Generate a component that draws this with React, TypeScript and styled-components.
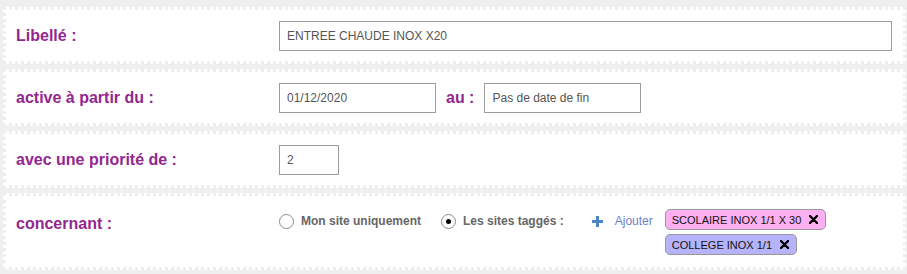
import * as React from 'react';
import styled, { createGlobalStyle } from 'styled-components';

const GlobalStyle = createGlobalStyle`
  body {
    margin: 0;
    background: #efefef;
    font-family: "Liberation Sans", Arial, sans-serif;
  }
`;

const Page = styled.div`
  display: flex;
  flex-direction: column;
  gap: 5px;
  padding: 7px 1px 4px 3px;
`;

const Panel = styled.div<{ tall?: boolean }>`
  display: grid;
  grid-template-columns: 263px 1fr;
  align-items: ${p => (p.tall ? 'start' : 'center')};
  box-sizing: border-box;
  height: ${p => (p.tall ? 'auto' : '57px')};
  padding: ${p => (p.tall ? '13px 11px 12px 10px' : '0 11px 0 10px')};
  background: #fff;
  border: 3px dotted #efefef;
`;

const Label = styled.div<{ tall?: boolean }>`
  color: #93278f;
  font-size: 16px;
  font-weight: bold;
  line-height: ${p => (p.tall ? '30px' : 'normal')};
`;

const Field = styled.div`
  display: flex;
  align-items: center;
`;

const TextInput = styled.input<{ w?: number }>`
  box-sizing: border-box;
  width: ${p => (p.w ? `${p.w}px` : '100%')};
  height: 30px;
  padding: 0 7px;
  border: 1px solid #9d9d9d;
  border-radius: 0;
  background: #fff;
  color: #555;
  font-family: "Liberation Sans", Arial, sans-serif;
  font-size: 12px;
  outline: none;
`;

const Au = styled.span`
  margin: 0 10px;
  color: #93278f;
  font-size: 16px;
  font-weight: bold;
`;

const Choices = styled.div`
  display: flex;
  align-items: flex-start;
`;

const ChoiceLine = styled.div`
  display: flex;
  align-items: center;
  height: 22px;
  margin-top: 1px;
`;

const Radio = styled.span<{ checked?: boolean }>`
  box-sizing: border-box;
  display: inline-flex;
  align-items: center;
  justify-content: center;
  width: 15px;
  height: 15px;
  border: 1px solid #8a8a8a;
  border-radius: 50%;
  background: #fff;
  margin-right: 7px;

  &::after {
    content: '';
    display: ${p => (p.checked ? 'block' : 'none')};
    width: 5px;
    height: 5px;
    border-radius: 50%;
    background: #000;
  }
`;

const RadioText = styled.span<{ gapAfter: number }>`
  color: #666;
  font-size: 12px;
  font-weight: bold;
  margin-right: ${p => p.gapAfter}px;
`;

const AddButton = styled.span`
  display: inline-flex;
  align-items: center;
  gap: 12px;
  color: #6c7fc4;
  font-size: 12px;
  margin-right: 12px;
`;

const Tags = styled.div`
  display: flex;
  flex-direction: column;
  align-items: flex-start;
  gap: 4px;
`;

const Tag = styled.span<{ bg: string }>`
  box-sizing: border-box;
  display: inline-flex;
  align-items: center;
  gap: 8px;
  height: 21px;
  padding: 0 7px 0 6px;
  border: 1px solid #999;
  border-radius: 5px;
  background: ${p => p.bg};
  color: #111;
  font-size: 11px;
`;

const PlusIcon = () => (
  <svg width="11" height="11" viewBox="0 0 11 11">
    <rect x="4" y="0" width="3" height="11" fill="#4d85c6" />
    <rect x="0" y="4" width="11" height="3" fill="#4d85c6" />
  </svg>
);

const CloseIcon = () => (
  <svg width="9" height="9" viewBox="0 0 9 9">
    <path d="M1 1 L8 8 M8 1 L1 8" stroke="#000" strokeWidth="2.4" strokeLinecap="round" />
  </svg>
);

export default function App() {
  return (
    <>
      <GlobalStyle />
      <Page>
        <Panel>
          <Label>Libellé :</Label>
          <Field>
            <TextInput defaultValue="ENTREE CHAUDE INOX X20" />
          </Field>
        </Panel>
        <Panel>
          <Label>active à partir du :</Label>
          <Field>
            <TextInput w={157} defaultValue="01/12/2020" />
            <Au>au :</Au>
            <TextInput w={157} defaultValue="Pas de date de fin" />
          </Field>
        </Panel>
        <Panel>
          <Label>avec une priorité de :</Label>
          <Field>
            <TextInput w={60} defaultValue="2" />
          </Field>
        </Panel>
        <Panel tall>
          <Label tall>concernant :</Label>
          <Choices>
            <ChoiceLine>
              <Radio />
              <RadioText gapAfter={20}>Mon site uniquement</RadioText>
              <Radio checked />
              <RadioText gapAfter={28}>Les sites taggés :</RadioText>
              <AddButton>
                <PlusIcon />
                Ajouter
              </AddButton>
            </ChoiceLine>
            <Tags>
              <Tag bg="#fdb0f1">
                SCOLAIRE INOX 1/1 X 30
                <CloseIcon />
              </Tag>
              <Tag bg="#b7b3fa">
                COLLEGE INOX 1/1
                <CloseIcon />
              </Tag>
            </Tags>
          </Choices>
        </Panel>
      </Page>
    </>
  );
}
